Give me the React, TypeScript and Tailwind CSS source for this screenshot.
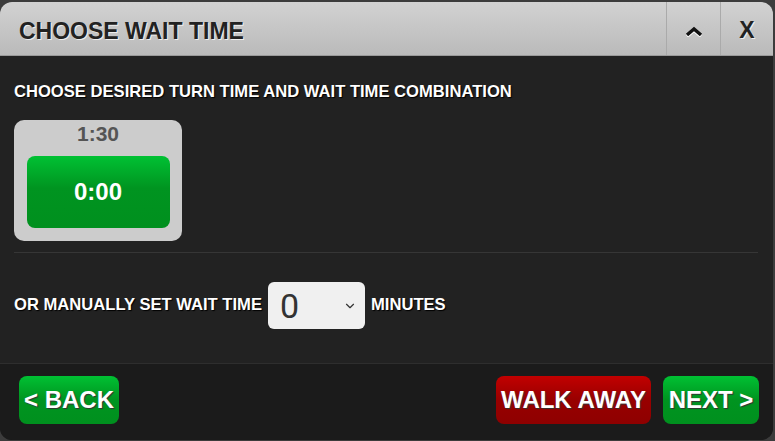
import { ChevronDown } from 'lucide-react';

const font = { fontFamily: '"Liberation Sans", Arial, sans-serif' };

export default function App() {
    return (
        <div className="w-[775px] h-[441px] bg-[#3c3c3c] pt-[2px] pr-[2px] pb-[1px]" style={font}>
            <div className="h-full rounded-[12px] overflow-hidden flex flex-col bg-[#222]">
                {/* header */}
                <div className="h-[54px] flex items-stretch bg-gradient-to-b from-[#d2d2d2] to-[#bababa] border-b border-[#9a9a9a]">
                    <h1 className="flex-1 flex items-center pl-[19px] pt-[5px] text-[23px] font-bold text-[#222] [text-shadow:1px_1px_0_#eee]">
                        CHOOSE WAIT TIME
                    </h1>
                    <button className="w-[54px] flex items-center justify-center border-l border-[#aaa] pt-[6px]">
                        <svg width="18" height="11" viewBox="0 0 18 11">
                            <path d="M2 9 L9 3 L16 9" fill="none" stroke="#fff" strokeWidth="3.5" transform="translate(0,1.2)" />
                            <path d="M2 9 L9 3 L16 9" fill="none" stroke="#111" strokeWidth="3.5" />
                        </svg>
                    </button>
                    <button className="w-[53px] flex items-center justify-center border-l border-[#aaa] pt-[3px] text-[23px] font-bold text-[#222] [text-shadow:1px_1px_0_#eee]">
                        X
                    </button>
                </div>

                {/* body */}
                <div className="flex-1 px-[14px] pt-[27px] flex flex-col">
                    <p className="text-[16.6px] font-bold text-white leading-[18px] [text-shadow:1px_1px_1px_#000]">
                        CHOOSE DESIRED TURN TIME AND WAIT TIME COMBINATION
                    </p>
                    <div className="mt-[19px] w-[168px] h-[121px] rounded-[10px] bg-[#cccccc] flex flex-col items-center pt-[1px]">
                        <span className="text-[21px] font-bold text-[#555] leading-[26px]">1:30</span>
                        <button className="mt-[9px] w-[143px] h-[72px] rounded-[8px] [background-image:linear-gradient(to_bottom,#00c133_0%,#009420_45%,#00901e_100%)] text-white text-[24px] font-bold">
                            0:00
                        </button>
                    </div>
                    <div className="mt-[11px] h-px bg-[#363636] mr-[1px]" />
                    <div className="mt-[29px] flex items-center gap-[6px]">
                        <span className="text-[16.6px] font-bold text-white [text-shadow:1px_1px_1px_#000]">OR MANUALLY SET WAIT TIME</span>
                        <div className="w-[97px] h-[47px] rounded-[6px] bg-[#f0f0f0] flex items-center justify-between pl-[12px] pr-[8px]">
                            <span className="text-[34px] text-[#333] leading-none" style={{ fontFamily: 'Roboto, "Liberation Sans", sans-serif' }}>0</span>
                            <ChevronDown size={14} strokeWidth={2} className="text-[#333]" />
                        </div>
                        <span className="text-[16.6px] font-bold text-white [text-shadow:1px_1px_1px_#000]">MINUTES</span>
                    </div>
                </div>

                {/* footer */}
                <div className="h-[77px] bg-[#1b1b1b] border-t border-[#2e2e2e] flex items-start pt-[12px] px-[19px] pr-[14px]">
                    <button className="w-[100px] h-[48px] rounded-[8px] [background-image:linear-gradient(to_bottom,#00c133_0%,#009420_50%,#00901e_100%)] text-white text-[24px] font-bold [text-shadow:1px_1px_1px_#333]">
                        &lt; BACK
                    </button>
                    <div className="flex-1" />
                    <button className="w-[155px] h-[48px] rounded-[8px] [background-image:linear-gradient(to_bottom,#c20000_0%,#980000_50%,#8e0000_100%)] text-white text-[24px] font-bold [text-shadow:1px_1px_1px_#333]">
                        WALK AWAY
                    </button>
                    <button className="ml-[12px] w-[96px] h-[48px] rounded-[8px] [background-image:linear-gradient(to_bottom,#00c133_0%,#009420_50%,#00901e_100%)] text-white text-[24px] font-bold [text-shadow:1px_1px_1px_#333]">
                        NEXT &gt;
                    </button>
                </div>
            </div>
        </div>
    );
}
